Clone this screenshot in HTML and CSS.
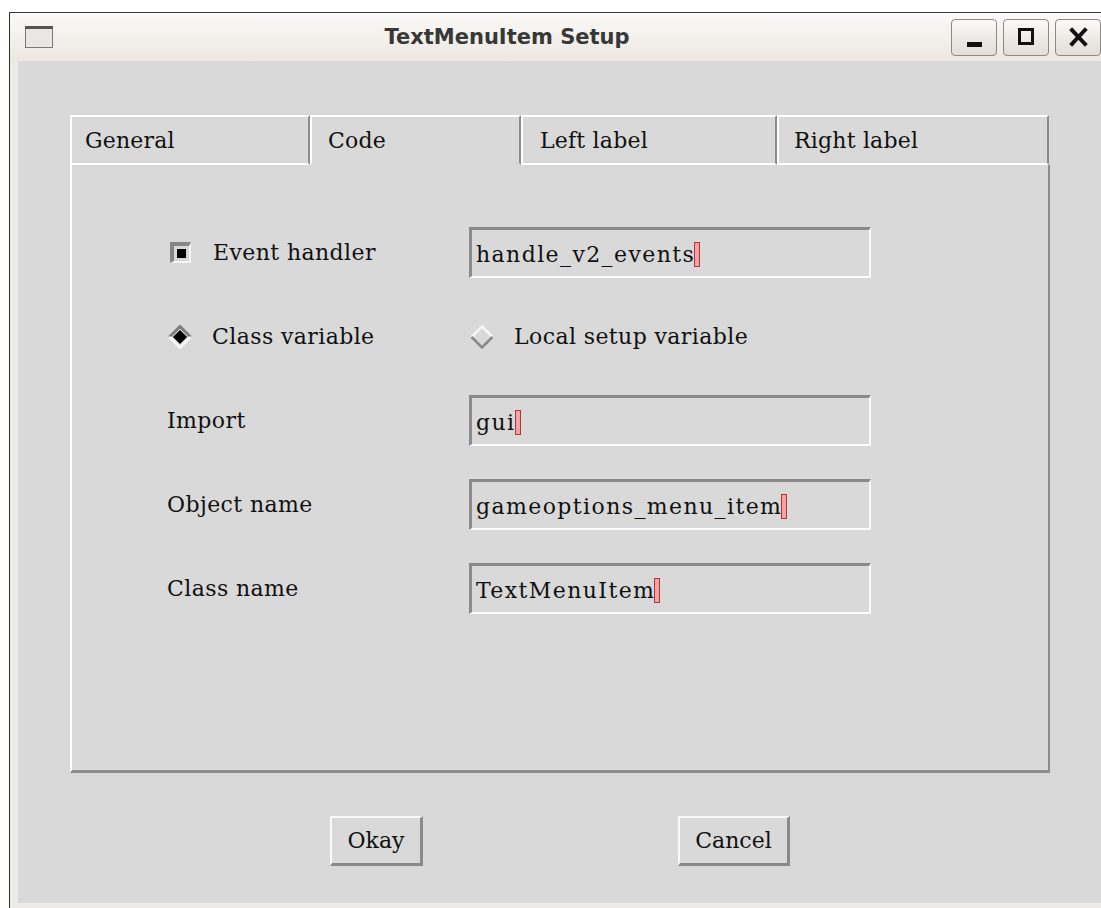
FILE: index.html
```html
<!DOCTYPE html>
<html lang="en">
<head>
<meta charset="utf-8">
<title>TextMenuItem Setup</title>
<link rel="stylesheet" href="styles.css">
</head>
<body>
<div class="window">
  <div class="titlebar">
    <svg class="app-icon" width="28" height="22" viewBox="0 0 28 22">
      <rect x="0.5" y="0.5" width="27" height="21" fill="#f1efec" stroke="#7a7a7a"/>
      <rect x="0" y="0" width="28" height="3" fill="#555"/>
      <rect x="1" y="3" width="26" height="18" fill="#e9e7e4"/>
    </svg>
    <div class="title">TextMenuItem Setup</div>
    <div class="wm-buttons">
      <span class="wm-btn">
        <svg width="44" height="35" viewBox="0 0 44 35"><rect x="15" y="22" width="15" height="5" fill="#111"/></svg>
      </span>
      <span class="wm-btn">
        <svg width="44" height="35" viewBox="0 0 44 35"><rect x="15.5" y="9.5" width="13" height="14" fill="none" stroke="#111" stroke-width="3"/><rect x="14" y="8" width="16" height="3" fill="#111"/></svg>
      </span>
      <span class="wm-btn">
        <svg width="44" height="35" viewBox="0 0 44 35"><path d="M16 10 L29 24 M29 10 L16 24" stroke="#111" stroke-width="4" stroke-linecap="square"/></svg>
      </span>
    </div>
  </div>

  <div class="client">
    <div class="notebook">
      <div class="tabs">
        <div class="tab tab-general">General</div>
        <div class="tab tab-code active">Code</div>
        <div class="tab tab-left">Left label</div>
        <div class="tab tab-right">Right label</div>
      </div>
      <div class="pane">
        <div class="form">
          <div class="option">
            <span class="checkbox"></span>
            <span class="option-text">Event handler</span>
          </div>
          <div class="field">handle_v2_events<span class="caret"></span></div>

          <div class="option">
            <svg class="diamond" width="24" height="24" viewBox="0 0 24 24">
              <polyline points="1.5,12 12,1.5 22.5,12" fill="none" stroke="#7d7d7d" stroke-width="3"/>
              <polyline points="1.5,12 12,22.5 22.5,12" fill="none" stroke="#f6f6f6" stroke-width="3"/>
              <polygon points="12,5 19,12 12,19 5,12" fill="#000"/>
            </svg>
            <span class="option-text">Class variable</span>
          </div>
          <div class="option option-right">
            <svg class="diamond" width="24" height="24" viewBox="0 0 24 24">
              <polyline points="1.5,12 12,1.5 22.5,12" fill="none" stroke="#f6f6f6" stroke-width="2.5"/>
              <polyline points="1.5,12 12,22.5 22.5,12" fill="none" stroke="#8a8a8a" stroke-width="2.5"/>
            </svg>
            <span class="option-text">Local setup variable</span>
          </div>

          <div class="label">Import</div>
          <div class="field">gui<span class="caret"></span></div>

          <div class="label">Object name</div>
          <div class="field">gameoptions_menu_item<span class="caret"></span></div>

          <div class="label">Class name</div>
          <div class="field">TextMenuItem<span class="caret"></span></div>
        </div>
      </div>
    </div>

    <div class="actions">
      <button class="btn btn-okay">Okay</button>
      <button class="btn btn-cancel">Cancel</button>
    </div>
  </div>
</div>
</body>
</html>
```

FILE: styles.css
```css
html,
body {
  margin: 0;
  padding: 0;
  background: #ffffff;
}

body {
  width: 1101px;
  height: 908px;
  overflow: hidden;
  font-family: "DejaVu Serif", "Liberation Serif", serif;
  color: #111;
}

/* window frame */
.window {
  margin: 12px 0 0 9px;
  height: 896px;
  border-top: 1px solid #3a3a3a;
  border-left: 1px solid #2e2e2e;
  background: #ecebe7;
  display: flex;
  flex-direction: column;
}

.titlebar {
  flex: none;
  height: 48px;
  display: flex;
  align-items: center;
  background: linear-gradient(#fbfaf8, #ece7e1);
}

.app-icon {
  flex: none;
  margin-left: 15px;
}

.title {
  flex: 1;
  text-align: center;
  padding-left: 10px;
  font-family: "DejaVu Sans", "Liberation Sans", sans-serif;
  font-weight: bold;
  font-size: 21px;
  color: #383838;
}

.wm-buttons {
  flex: none;
  display: flex;
  gap: 6px;
}

.wm-btn {
  width: 44px;
  height: 35px;
  border: 1px solid #8d8985;
  border-radius: 4px;
  background: linear-gradient(#fbfaf8, #e2ddd7);
  display: block;
}

.wm-btn svg {
  display: block;
}

/* dialog body */
.client {
  flex: none;
  height: 842px;
  margin-left: 8px;
  box-sizing: border-box;
  padding: 54px 51px 0 52px;
  background: #d9d9d9;
}

.tabs {
  display: flex;
}

.tab {
  box-sizing: border-box;
  height: 50px;
  padding-left: 13px;
  border-top: 2px solid #ffffff;
  border-left: 2px solid #ffffff;
  border-right: 2px solid #8c8c8c;
  border-bottom: 2px solid #ffffff;
  font-size: 22px;
  line-height: 47px;
  letter-spacing: 0.2px;
  white-space: nowrap;
}

.tab.active {
  border-bottom-color: #d9d9d9;
}

.tab-general { width: 240px; }
.tab-code { width: 211px; padding-left: 16px; }
.tab-left { width: 256px; padding-left: 17px; }
.tab-right { width: 272px; padding-left: 15px; }

.pane {
  box-sizing: border-box;
  height: 608px;
  border-left: 2px solid #ffffff;
  border-right: 2px solid #8c8c8c;
  border-bottom: 3px solid #8c8c8c;
  padding: 62px 0 0 95px;
}

.form {
  display: grid;
  grid-template-columns: 302px 402px;
  grid-auto-rows: 51px;
  row-gap: 33px;
  align-items: center;
  font-size: 22px;
  letter-spacing: 0.4px;
}

.option {
  display: flex;
  align-items: center;
}

.option-text {
  margin-left: 20px;
}

.option-right .option-text {
  margin-left: 20px;
}

.checkbox {
  box-sizing: border-box;
  width: 21px;
  height: 21px;
  margin-left: 3px;
  margin-right: 2px;
  border-top: 4px solid #868686;
  border-left: 4px solid #868686;
  border-bottom: 2px solid #f4f4f4;
  border-right: 2px solid #f4f4f4;
  display: flex;
  align-items: center;
  justify-content: center;
}

.checkbox::after {
  content: "";
  width: 9px;
  height: 9px;
  background: #000;
}

.diamond {
  flex: none;
  display: block;
  margin-left: 1px;
}

.field {
  box-sizing: border-box;
  height: 51px;
  width: 402px;
  border-top: 3px solid #8a8a8a;
  border-left: 3px solid #8a8a8a;
  border-bottom: 2px solid #fbfbfb;
  border-right: 2px solid #fbfbfb;
  padding-left: 4px;
  padding-top: 2px;
  display: flex;
  align-items: center;
  white-space: nowrap;
  letter-spacing: 1.4px;
}

.caret {
  display: inline-block;
  box-sizing: border-box;
  width: 6px;
  height: 25px;
  margin-left: -1px;
  border: 1px solid #b43535;
  background: #f3a3a3;
}

/* dialog buttons */
.actions {
  display: flex;
  justify-content: center;
  gap: 255px;
  padding-top: 43px;
}

.btn {
  box-sizing: border-box;
  height: 50px;
  padding: 0;
  background: #d9d9d9;
  border-top: 2px solid #fafafa;
  border-left: 2px solid #fafafa;
  border-bottom: 3px solid #8a8a8a;
  border-right: 3px solid #8a8a8a;
  font-family: "DejaVu Serif", "Liberation Serif", serif;
  font-size: 22px;
  color: #111;
}

.btn-okay { width: 93px; }
.btn-cancel { width: 112px; }
```
